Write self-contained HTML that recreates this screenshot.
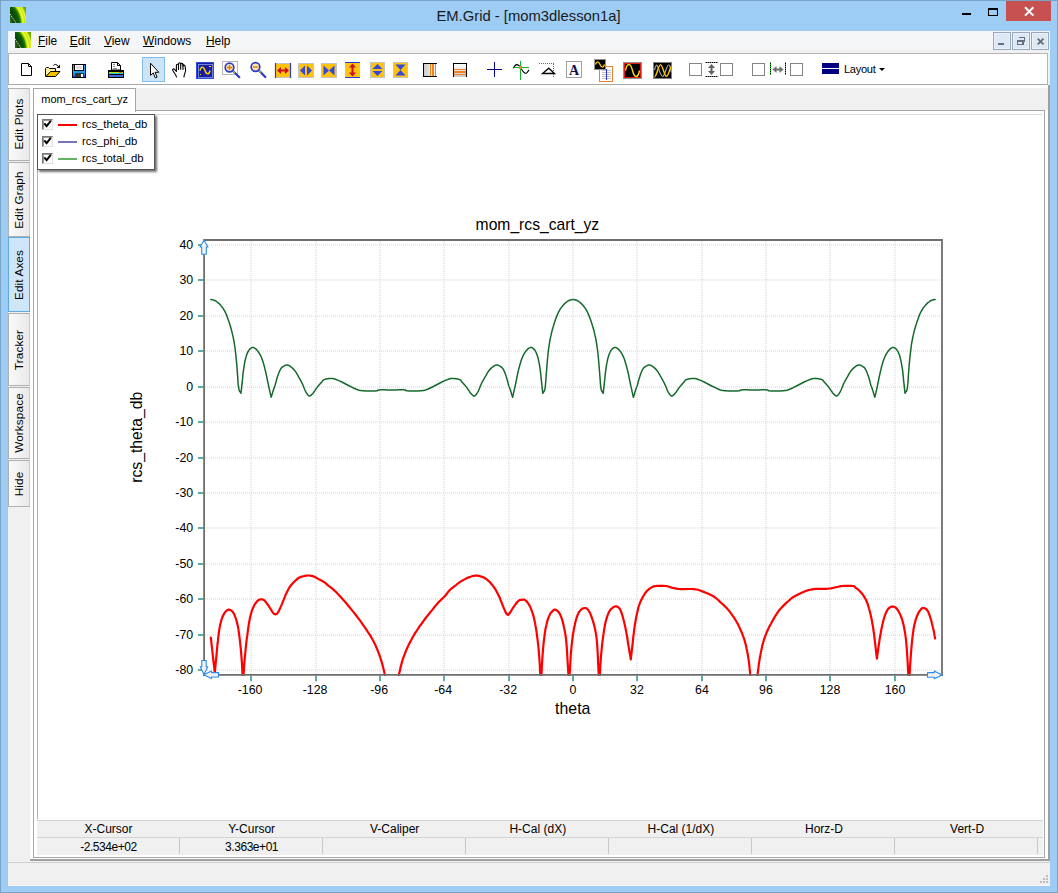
<!DOCTYPE html>
<html><head><meta charset="utf-8"><title>EM.Grid - [mom3dlesson1a]</title>
<style>
html,body{margin:0;padding:0;}
body{width:1058px;height:893px;overflow:hidden;background:#9dcdf5;font-family:"Liberation Sans",sans-serif;color:#000;position:relative;}
.abs,.mi,.vtab,.th,.td,.lg{position:absolute;}
#frame{left:0;top:0;width:1056px;height:891px;border:1px solid #7aa3c8;}
#title{left:436px;top:5.7px;width:185px;text-align:center;font-size:14.8px;line-height:20px;color:#1a1a1a;white-space:nowrap;}
#closeb{left:1006px;top:1px;width:45px;height:20px;background:#c75050;}
#menubar{left:8px;top:31px;width:1042px;height:19px;background:#f5f6f7;}
.mi{top:33px;font-size:11.9px;line-height:16px;}
.mdib{position:absolute;top:32px;width:16px;height:16px;background:#deE8f5;border:1px solid #98a8be;box-shadow:inset 0 0 0 1px #eaf1fa;}
#client{left:8px;top:50px;width:1042px;height:835px;background:#f0f0f0;}
#toolbar{left:8px;top:53px;width:1038px;height:30px;background:#fff;border:1px solid #b4b4b4;border-bottom:1px solid #a8a8a8;box-shadow:0 1px 0 #d0d0d0;}
#dock{left:30px;top:85px;width:1018px;height:774px;background:#fff;border-right:2px solid #a0a0a0;border-bottom:2px solid #a0a0a0;}
#strip{left:33px;top:88px;width:1015px;height:22px;background:#f0f0f0;}
#panel{left:33px;top:110px;width:1010px;height:746px;background:#fff;border:1px solid #a6a6a6;}
#htab{left:33px;top:88px;width:101px;height:23px;background:#fff;border:1px solid #a6a6a6;border-bottom:none;font-size:11px;}
#htab span{position:absolute;left:7.3px;top:4px;line-height:13px;white-space:nowrap;transform-origin:0 0;}
#sel{left:142px;top:57px;width:21px;height:23px;background:#cce4f7;border:1px solid #84bdea;}
.vtab{left:8px;width:20px;background:linear-gradient(90deg,#fafafa,#e9e9e9);border:1px solid #b0b0b0;border-right:1px solid #c8c8c8;}
.vtab.on{background:#cfe6fa;border-color:#5fa9e6;}
.vtab span{position:absolute;left:50%;top:50%;transform:translate(-50%,-50%) rotate(-90deg);white-space:nowrap;font-size:11.8px;line-height:14px;letter-spacing:0.1px;}
#legend{left:37px;top:114px;width:116px;height:54px;background:#fff;border:1px solid #555;box-shadow:2px 2px 2px rgba(0,0,0,0.55);}
.lg{left:44px;font-size:11.3px;line-height:14px;white-space:nowrap;}
.cb{position:absolute;left:4px;width:9px;height:9px;background:#fff;border:1px solid #777;border-right-color:#e0e0e0;border-bottom-color:#e0e0e0;box-shadow:inset 1px 1px 0 #9a9a9a;}
.ls{position:absolute;left:19.5px;width:19.5px;height:2px;}
#tbl{left:37px;top:820px;width:1006px;height:34px;background:#f0f0f0;border-top:1px solid #d4d4d4;}
#tbl .hl{position:absolute;left:0;top:15.5px;width:1006px;height:1px;background:#d4d4d4;}
.th{top:821px;width:143px;text-align:center;font-size:12px;line-height:16px;}
.td{top:839px;width:143px;text-align:center;font-size:12px;letter-spacing:-0.45px;line-height:16px;}
.vs{position:absolute;top:838px;width:1px;height:16px;background:#c8c8c8;}
#status{left:8px;top:861.5px;width:1042px;height:22px;background:#f0f0f0;border-top:1px solid #d0d0d0;border-bottom:1px solid #f8f8f8;}
#lay{left:844px;top:62px;font-size:11.1px;line-height:14px;letter-spacing:-0.3px;}
</style></head><body>
<div class="abs" id="frame"></div>
<div class="abs" id="title">EM.Grid - [mom3dlesson1a]</div>
<div class="abs" id="closeb"></div>
<div class="abs" id="menubar"></div>
<span class="mi" style="left:38.0px"><u>F</u>ile</span>
<span class="mi" style="left:69.7px"><u>E</u>dit</span>
<span class="mi" style="left:104.0px"><u>V</u>iew</span>
<span class="mi" style="left:143.0px"><u>W</u>indows</span>
<span class="mi" style="left:206.0px"><u>H</u>elp</span>
<div class="mdib" style="left:993px"></div>
<div class="mdib" style="left:1012px"></div>
<div class="mdib" style="left:1031px"></div>
<div class="abs" id="client"></div>
<div class="abs" id="toolbar"></div>
<div class="abs" id="sel"></div>
<div class="abs" id="lay">Layout</div>
<div class="abs" style="left:8px;top:85px;width:1042px;height:3px;background:#fbfbfb"></div>
<div class="abs" id="dock"></div>
<div class="abs" id="strip"></div>
<div class="abs" id="panel"></div>
<div class="abs" style="left:37px;top:114px;width:1px;height:705px;background:#b0b0b0"></div><div class="abs" style="left:37px;top:114px;width:1005px;height:1px;background:#dcdcdc"></div>
<div class="abs" id="htab"><span>mom_rcs_cart_yz</span></div>
<div class="vtab" style="top:87.5px;height:71.5px"><span>Edit Plots</span></div>
<div class="vtab" style="top:162.0px;height:73.0px"><span>Edit Graph</span></div>
<div class="vtab on" style="top:237.0px;height:73.0px"><span>Edit Axes</span></div>
<div class="vtab" style="top:313.0px;height:71.0px"><span>Tracker</span></div>
<div class="vtab" style="top:387.0px;height:70.0px"><span>Workspace</span></div>
<div class="vtab" style="top:460.0px;height:45.0px"><span>Hide</span></div>
<div class="abs" id="legend">
<div class="cb" style="top:4.2px"></div><div class="ls" style="top:8.7px;background:#ff0000"></div><div class="lg" style="top:2.2px">rcs_theta_db</div>
<div class="cb" style="top:21.2px"></div><div class="ls" style="top:25.7px;background:#7474b8"></div><div class="lg" style="top:19.2px">rcs_phi_db</div>
<div class="cb" style="top:38.2px"></div><div class="ls" style="top:42.7px;background:#66b266"></div><div class="lg" style="top:36.2px">rcs_total_db</div>
</div>
<div class="abs" id="tbl"><div class="hl"></div></div>
<div class="th" style="left:37.0px">X-Cursor</div>
<div class="td" style="left:37.0px">-2.534e+02</div>
<div class="vs" style="left:178.6px"></div>
<div class="th" style="left:180.1px">Y-Cursor</div>
<div class="td" style="left:180.1px">3.363e+01</div>
<div class="vs" style="left:321.7px"></div>
<div class="th" style="left:323.2px">V-Caliper</div>
<div class="vs" style="left:464.8px"></div>
<div class="th" style="left:466.3px">H-Cal (dX)</div>
<div class="vs" style="left:607.9px"></div>
<div class="th" style="left:609.4px">H-Cal (1/dX)</div>
<div class="vs" style="left:751.0px"></div>
<div class="th" style="left:752.5px">Horz-D</div>
<div class="vs" style="left:894.1px"></div>
<div class="th" style="left:895.6px">Vert-D</div>
<div class="vs" style="left:1037.2px"></div>
<div class="abs" id="status"></div>
<svg class="abs" style="left:0;top:0" width="1058" height="893" viewBox="0 0 1058 893" font-family="Liberation Sans, sans-serif">
<g id="icons" shape-rendering="crispEdges">
<!-- title icon + menu icon -->
<defs>
<linearGradient id="lg1" x1="0" y1="1" x2="1" y2="0"><stop offset="0" stop-color="#0b3d05"/><stop offset="0.38" stop-color="#0a5a08"/><stop offset="0.5" stop-color="#9fd400"/><stop offset="0.62" stop-color="#f6ff3a"/><stop offset="0.75" stop-color="#a6d800"/><stop offset="1" stop-color="#5aa000"/></linearGradient>
<radialGradient id="rg1" cx="-0.9" cy="1.05" r="2.2" fx="-0.9" fy="1.05"><stop offset="0" stop-color="#3a6a14"/><stop offset="0.42" stop-color="#3a6a14"/><stop offset="0.52" stop-color="#0a4208"/><stop offset="0.66" stop-color="#0c5c0a"/><stop offset="0.71" stop-color="#2c8a08"/><stop offset="0.745" stop-color="#b4de00"/><stop offset="0.79" stop-color="#f8ff44"/><stop offset="0.83" stop-color="#c4e600"/><stop offset="0.87" stop-color="#e8f840"/><stop offset="0.9" stop-color="#8ec400"/><stop offset="0.94" stop-color="#6aaa00"/><stop offset="1" stop-color="#5a9c00"/></radialGradient>
<linearGradient id="gw" x1="0" y1="0" x2="1" y2="0"><stop offset="0" stop-color="#c8c8c8"/><stop offset="1" stop-color="#ffffff"/></linearGradient>
<linearGradient id="gw2" x1="0" y1="0" x2="0" y2="1"><stop offset="0" stop-color="#ffffff"/><stop offset="1" stop-color="#c8c8c8"/></linearGradient>
<linearGradient id="sv" x1="0" y1="0" x2="0" y2="1"><stop offset="0" stop-color="#12b0f4"/><stop offset="0.7" stop-color="#1a9af0"/><stop offset="1" stop-color="#3a34d8"/></linearGradient>
</defs>
<rect x="10" y="7" width="16" height="16" fill="url(#rg1)"/>
<path d="M10,14l6,9" stroke="#dfe8c0" stroke-width="1" stroke-dasharray="1.5,1" fill="none" shape-rendering="auto"/>
<rect x="15" y="32" width="16" height="16" fill="url(#rg1)"/>
<path d="M15,39l6,9" stroke="#dfe8c0" stroke-width="1" stroke-dasharray="1.5,1" fill="none" shape-rendering="auto"/>
<!-- caption buttons -->
<rect x="962" y="13" width="9" height="2" fill="#000"/>
<path d="M988.5,9H997.5V15.5H988.5Z" fill="none" stroke="#000" stroke-width="1"/><rect x="988" y="7.5" width="10" height="2.5" fill="#000"/>
<path d="M1025,7.2l8.4,8.4M1033.400,7.2l-8.4,8.4" stroke="#fff" stroke-width="2" fill="none" shape-rendering="auto"/>
<!-- mdi buttons -->
<rect x="998" y="43" width="6" height="2" fill="#66707c"/>
<path d="M1019.300,37.700H1024.800V41.800" fill="none" stroke="#66707c" stroke-width="1.300"/>
<path d="M1017.800,41H1023V44.500H1017.800Z" fill="none" stroke="#66707c" stroke-width="1.200"/><path d="M1017.200,40.800H1023.600" stroke="#66707c" stroke-width="1.800"/>
<path d="M1037.700,38.600l5.800,5.800M1043.500,38.600l-5.800,5.800" stroke="#66707c" stroke-width="1.900" fill="none" shape-rendering="auto"/>
<!-- new -->
<path d="M21.500,63.500H28.500L31.500,66.500V75.500H21.500Z" fill="#fff" stroke="#000" shape-rendering="auto"/><path d="M28.500,63.500V66.500H31.500" fill="none" stroke="#000" shape-rendering="auto"/>
<!-- open -->
<path d="M45.500,76.500V68.500L46.500,67.500H48.500L49.500,68.500H55.500V71.500" fill="#fdf0a0" stroke="#000" shape-rendering="auto"/>
<path d="M46,76.500L50.500,71.500H60L55.500,76.500Z" fill="#f6c200" stroke="#000" shape-rendering="auto"/>
<path d="M53.300,65.500Q55.500,62.800 58.600,66.600" fill="none" stroke="#000" shape-rendering="auto"/><path d="M60,64.500V68H56.500Z" fill="#000" shape-rendering="auto"/>
<!-- save -->
<rect x="72.500" y="64.500" width="13" height="13" fill="url(#sv)" stroke="#000"/>
<rect x="74.500" y="64.500" width="9" height="5.500" fill="#fff" stroke="#000"/><rect x="76" y="66" width="6" height="2.500" fill="#dcdcdc"/>
<rect x="75" y="73" width="9" height="4" fill="#333"/><rect x="81" y="74" width="2" height="3" fill="#fff"/>
<!-- print -->
<path d="M111.500,70V62.500H117.500L120.500,65.500V70Z" fill="#fff" stroke="#000" shape-rendering="auto"/><path d="M117.500,62.500V65.500H120.500" fill="none" stroke="#000" shape-rendering="auto"/>
<path d="M113,64.500h1.500M113,66.500h2M113,68.500h4" stroke="#888" stroke-width="1"/>
<rect x="108.500" y="70.500" width="15" height="7" rx="1" fill="#000" stroke="#000"/>
<rect x="109" y="72" width="14" height="1" fill="#c8e000"/><rect x="119" y="72" width="3" height="1" fill="#ff5020"/><rect x="109" y="73" width="14" height="1" fill="#20d0e0"/><rect x="109" y="75" width="14" height="2" fill="#4868d8"/>
<!-- pointer -->
<path d="M150.500,63.200V75.400L153.200,72.900L155.300,77.900L157.100,77.100L155,72.300H158.800Z" fill="#fff" stroke="#000" stroke-width="1" stroke-linejoin="miter" shape-rendering="auto"/>
<!-- hand -->
<g fill="#fff" stroke="#000" stroke-width="1.100" stroke-linejoin="round" stroke-linecap="round" shape-rendering="auto">
<path d="M176.500,77C176,74.500 173.800,72.500 172.800,70.500C172.300,69.200 173.600,68.400 174.600,69.400L176.400,71.500V65.300C176.400,63.900 178.400,63.900 178.500,65.300V63.800C178.600,62.300 180.600,62.300 180.700,63.800V64.300C180.800,63 182.900,63 183,64.400V66C183.100,64.800 185,64.800 185.100,66.200C185.400,70 186.500,70.500 184.800,73.500C184.300,74.500 184,75.800 184,77"/>
<path d="M178.500,65.300V69.500M180.700,64V69.300M183,64.500V69.500" fill="none"/></g>
<!-- graph -->
<rect x="196.500" y="62.500" width="17" height="16" fill="#1a1e9c" stroke="#2e4cd8"/><rect x="198" y="64" width="14" height="13" fill="none" stroke="#8aa0f0" stroke-width="0.800"/>
<path d="M200,70.500C201,66 203.500,66 205,70.500S209,75 210,70.500" fill="none" stroke="#ffd800" stroke-width="1.400" shape-rendering="auto"/><rect x="199.500" y="73.500" width="1.600" height="1.600" fill="#ffd800"/><rect x="209" y="65.500" width="1.600" height="1.600" fill="#ffd800"/>
<!-- zoom in/out -->
<rect x="222.500" y="61.500" width="15" height="13" fill="none" stroke="#b8b8b8"/>
<g shape-rendering="auto"><path d="M233,71L239.300,77.200" stroke="#3038c8" stroke-width="2.200" stroke-linecap="round"/><path d="M233,71L235,73" stroke="#9acd32" stroke-width="1.200"/>
<circle cx="229.500" cy="67.500" r="4.300" fill="#f6e8b0" stroke="#3038c8" stroke-width="1.700"/><path d="M227,67.500h5M229.500,65v5" stroke="#f07000" stroke-width="1.300"/>
<path d="M259,70.500L265.300,77" stroke="#3038c8" stroke-width="2.200" stroke-linecap="round"/><path d="M259,70.500L261,72.500" stroke="#9acd32" stroke-width="1.200"/>
<circle cx="255.500" cy="67" r="4.300" fill="#f6e8b0" stroke="#3038c8" stroke-width="1.700"/><path d="M253,67h5" stroke="#f07000" stroke-width="1.300"/></g>
<!-- yellow icons -->
<g shape-rendering="auto">
<rect x="275.500" y="63.500" width="15" height="14" fill="#ffc30f" stroke="#c4c4c4"/><path d="M275.500,63v15M290.500,63v15" stroke="#2a3cd8" stroke-width="1.200"/>
<path d="M277,70.500l4,-3.500v2.500h4v-2.500l4,3.500l-4,3.500v-2.500h-4v2.500z" fill="#c8101e"/>
<rect x="298.500" y="63.500" width="15" height="14" fill="#ffc30f" stroke="#c4c4c4"/><path d="M300,70.500l5,-5v10zM312,70.500l-5,-5v10z" fill="#3548d8"/>
<rect x="321.500" y="63.500" width="15" height="14" fill="#ffc30f" stroke="#c4c4c4"/><path d="M323.500,65.500l5.500,5l5.500,-5v10l-5.500,-5l-5.500,5z" fill="#3548d8"/>
<rect x="345.500" y="62.500" width="14" height="15" fill="#ffc30f" stroke="#c4c4c4"/><path d="M345,62.500h15M345,77.500h15" stroke="#2a3cd8" stroke-width="1.200"/>
<path d="M352.500,63.500l3.500,4h-2.500v5h2.500l-3.500,4l-3.500,-4h2.500v-5h-2.500z" fill="#c8101e"/>
<rect x="370.500" y="62.500" width="14" height="15" fill="#ffc30f" stroke="#c4c4c4"/><path d="M377.500,64l5,5h-10zM377.500,76l5,-5h-10z" fill="#3548d8"/>
<rect x="393.500" y="62.500" width="14" height="15" fill="#ffc30f" stroke="#c4c4c4"/><path d="M395.500,64.500h10l-5,5.500l5,5.500h-10l5,-5.500z" fill="#3548d8"/>
</g>
<!-- v-lines / h-lines -->
<rect x="423" y="63.500" width="14" height="13" fill="url(#gw)"/><path d="M437,63.500H423.500V76.500H437" fill="none" stroke="#000" stroke-width="1.200"/><path d="M430.500,64v12M433,64v12M435.500,64v12" stroke="#f08020" stroke-width="1.100"/>
<rect x="453.500" y="64" width="13" height="13" fill="url(#gw2)"/><path d="M453.500,77V63.500H466.500V77" fill="none" stroke="#000" stroke-width="1.200"/><path d="M454,69.500h12M454,72h12M454,74.500h12" stroke="#f08020" stroke-width="1.100"/>
<!-- plus -->
<path d="M494.500,62v15M487,69.500h15" stroke="#000080" stroke-width="1.400"/>
<!-- green cross sine -->
<g shape-rendering="auto"><path d="M513.500,68.200C515.500,63.500 518,63.500 520.500,67.500S525.500,77 529,69.800" fill="none" stroke="#000" stroke-width="1.100"/>
<path d="M520.500,61v19M513.500,67.500h15.500" stroke="#18b030" stroke-width="1.300" shape-rendering="crispEdges"/><rect x="519" y="66" width="3" height="3" fill="#f08020"/></g>
<!-- triangle magenta -->
<path d="M539,63.500h15M553.500,63.500v14" stroke="#ff00ff" stroke-width="1.200" stroke-dasharray="1,1"/>
<path d="M548.800,68.200L554.500,73.500H542.500Z" fill="none" stroke="#000" stroke-width="1.300" shape-rendering="auto"/>
<!-- A -->
<rect x="566.500" y="61.500" width="15" height="16" fill="#fff" stroke="#a0a0a0"/>
<!-- copy -->
<rect x="599.500" y="66.500" width="13" height="15" fill="#fff" stroke="#f08030"/><path d="M601.500,70.500h9M601.500,72.500h9M601.500,74.500h9M601.500,76.500h9M601.500,78.500h9" stroke="#c0c0c0"/><path d="M606.500,69v10.500" stroke="#3030e0" stroke-width="1.400"/>
<rect x="594.500" y="59.500" width="11" height="10" fill="#000" stroke="#909090"/><path d="M595.500,64.500C596.500,61 598.500,61 600,64.500S603.500,68 604.500,64.500" fill="none" stroke="#ffd800" stroke-width="1.300" shape-rendering="auto"/>
<!-- red scope -->
<rect x="623.500" y="62.500" width="18" height="16" fill="#000" stroke="#909090"/><rect x="624.500" y="63.500" width="16" height="14" fill="none" stroke="#e01818" stroke-width="1.200"/>
<path d="M625.500,70.500C627,62.500 630.500,62.500 632.500,70.500S638,78.500 639.500,70.500" fill="none" stroke="#ffe000" stroke-width="1.400" shape-rendering="auto"/>
<!-- gray scope -->
<rect x="653.500" y="62.500" width="18" height="16" fill="#000" stroke="#808080" stroke-width="1.300"/>
<path d="M654.500,70C655.300,67 656,65 656.800,65S660.700,76.500 662.700,76.500S666.600,65 668.600,65S670.500,69 671.300,72" fill="none" stroke="#a8a8a8" stroke-width="1.200" shape-rendering="auto"/>
<path d="M654.500,77C656.500,77 658.500,64.600 660.500,64.600S664.400,76.300 666.400,76.300S669.500,70 671,66.500" fill="none" stroke="#ffc800" stroke-width="1.400" shape-rendering="auto"/>
<!-- squares + arrows -->
<g fill="#fff" stroke="#858585" stroke-width="1"><rect x="689.500" y="63.500" width="12" height="12"/><rect x="720.500" y="63.500" width="12" height="12"/><rect x="752.500" y="63.500" width="12" height="12"/><rect x="790.500" y="63.500" width="12" height="12"/></g>
<path d="M705,62.500h13M705,76.500h13" stroke="#20d020" stroke-width="1" stroke-dasharray="1,1"/><path d="M705,62.500h13M705,76.500h13" stroke="#000" stroke-width="1" stroke-dasharray="1,1" stroke-dashoffset="1"/>
<path d="M711.500,64l3.500,4h-2.500v3h2.500l-3.500,4l-3.500,-4h2.500v-3h-2.500z" fill="#606060" shape-rendering="auto"/>
<path d="M770.500,62v13M785.500,62v13" stroke="#20d020" stroke-width="1" stroke-dasharray="1,1"/><path d="M770.500,62v13M785.500,62v13" stroke="#000" stroke-width="1" stroke-dasharray="1,1" stroke-dashoffset="1"/>
<path d="M772.500,69.500l4,-3.500v2.500h3v-2.500l4,3.500l-4,3.500v-2.500h-3v2.500z" fill="#707070" shape-rendering="auto"/>
<!-- layout -->
<rect x="822" y="63" width="17" height="11" fill="#000080"/><rect x="822" y="68" width="17" height="1" fill="#fff"/>
<path d="M879,68h6l-3,3z" fill="#000" shape-rendering="auto"/>
<!-- grip -->
<g fill="#bdbdbd"><rect x="1046" y="875" width="2" height="2"/><rect x="1043" y="878" width="2" height="2"/><rect x="1046" y="878" width="2" height="2"/><rect x="1040" y="881" width="2" height="2"/><rect x="1043" y="881" width="2" height="2"/><rect x="1046" y="881" width="2" height="2"/></g>
<!-- checkmarks -->
<g fill="none" stroke="#000" stroke-width="2" shape-rendering="auto"><path d="M44.300,123.400l2.300,2.700l4.200,-5.200"/><path d="M44.300,140.400l2.300,2.700l4.200,-5.200"/><path d="M44.300,157.400l2.300,2.700l4.200,-5.200"/></g>
</g>
<text x="574" y="75" font-family="Liberation Serif, serif" font-weight="bold" font-size="14" text-anchor="middle" fill="#101050">A</text>

<g id="chart">
<path d="M205,245H941M205,280H941M205,316H941M205,351H941M205,387H941M205,422H941M205,458H941M205,493H941M205,528H941M205,564H941M205,599H941M205,635H941M205,670H941M251,241V674M316,241V674M380,241V674M444,241V674M509,241V674M573,241V674M637,241V674M702,241V674M766,241V674M830,241V674M895,241V674" stroke="#d4d4d4" stroke-width="1" stroke-dasharray="1,1" fill="none"/>
<path d="M198,245H203.5M198,280H203.5M198,316H203.5M198,351H203.5M198,387H203.5M198,422H203.5M198,458H203.5M198,493H203.5M198,528H203.5M198,564H203.5M198,599H203.5M198,635H203.5M198,670H203.5M251,675.5V681.2M316,675.5V681.2M380,675.5V681.2M444,675.5V681.2M509,675.5V681.2M573,675.5V681.2M637,675.5V681.2M702,675.5V681.2M766,675.5V681.2M830,675.5V681.2M895,675.5V681.2" stroke="#62aaa4" stroke-width="2" fill="none"/>
<clipPath id="cp"><rect x="204" y="240" width="738" height="436"/></clipPath>
<g clip-path="url(#cp)" fill="none" stroke-linejoin="round" stroke-linecap="round">
<path d="M210.8,299.5 L211.4,299.6 L212.1,299.7 L212.7,299.8 L213.3,300.0 L214.0,300.2 L214.8,300.5 L215.5,300.9 L216.3,301.4 L217.1,302.0 L218.0,302.6 L218.8,303.4 L219.7,304.2 L220.5,305.1 L221.3,306.1 L222.2,307.2 L223.0,308.4 L223.8,309.6 L224.6,310.9 L225.2,312.2 L225.9,313.5 L226.5,314.9 L227.1,316.4 L227.6,317.9 L228.2,319.6 L228.9,321.4 L229.5,323.4 L230.2,325.5 L230.8,327.7 L231.4,329.8 L231.9,331.9 L232.4,333.9 L232.9,335.9 L233.3,337.9 L233.7,339.9 L234.1,342.0 L234.4,344.2 L234.8,346.5 L235.1,348.9 L235.4,351.4 L235.7,354.0 L236.0,356.5 L236.2,359.0 L236.5,361.5 L236.7,363.9 L236.9,366.4 L237.1,368.9 L237.3,371.3 L237.4,373.8 L237.7,376.4 L237.8,379.1 L238.0,381.8 L238.2,384.4 L238.5,386.7 L238.8,388.6 L239.1,390.0 L239.4,390.9 L239.8,391.6 L240.2,392.1 L240.6,392.6 L240.9,393.3 L241.1,391.8 L241.3,390.3 L241.5,388.8 L241.6,387.3 L241.8,385.6 L242.1,383.7 L242.3,381.5 L242.5,379.1 L242.8,376.5 L243.0,373.8 L243.3,371.3 L243.7,368.9 L244.0,366.6 L244.4,364.4 L244.8,362.2 L245.2,360.1 L245.7,358.2 L246.2,356.5 L246.6,355.0 L247.1,353.7 L247.6,352.5 L248.2,351.5 L248.7,350.6 L249.2,349.8 L249.8,349.1 L250.4,348.5 L251.0,348.1 L251.7,347.7 L252.3,347.5 L252.9,347.5 L253.6,347.6 L254.3,347.9 L255.1,348.3 L255.8,348.9 L256.5,349.6 L257.2,350.4 L258.0,351.3 L258.7,352.4 L259.4,353.5 L260.2,354.8 L260.9,356.2 L261.6,357.8 L262.2,359.5 L262.9,361.4 L263.5,363.5 L264.1,365.6 L264.7,367.8 L265.2,370.1 L265.8,372.5 L266.3,374.9 L266.9,377.5 L267.4,380.1 L267.9,382.5 L268.4,384.9 L268.8,387.1 L269.3,389.2 L269.8,391.2 L270.2,393.2 L270.7,395.2 L271.1,397.2 L271.6,395.7 L272.1,394.2 L272.6,392.6 L273.1,391.1 L273.5,389.7 L273.9,388.6 L274.1,387.8 L274.4,387.2 L274.5,386.8 L274.7,386.3 L274.9,385.7 L275.2,384.9 L275.5,383.7 L275.9,382.4 L276.3,380.8 L276.7,379.3 L277.1,377.7 L277.6,376.3 L278.1,374.9 L278.6,373.6 L279.1,372.2 L279.6,371.0 L280.2,369.8 L280.7,368.9 L281.2,368.2 L281.7,367.6 L282.2,367.2 L282.8,366.8 L283.3,366.5 L283.8,366.2 L284.3,365.9 L284.8,365.6 L285.3,365.3 L285.8,365.1 L286.3,364.9 L286.9,364.9 L287.5,365.0 L288.1,365.2 L288.7,365.4 L289.3,365.7 L289.9,366.1 L290.6,366.6 L291.3,367.1 L292.0,367.7 L292.8,368.4 L293.5,369.1 L294.2,369.9 L294.9,370.7 L295.6,371.6 L296.2,372.6 L296.8,373.6 L297.4,374.7 L298.0,375.8 L298.6,376.9 L299.2,378.0 L299.9,379.1 L300.5,380.2 L301.1,381.4 L301.7,382.5 L302.3,383.7 L302.9,384.9 L303.4,386.2 L303.9,387.5 L304.4,388.8 L304.9,390.0 L305.4,391.0 L305.8,391.9 L306.3,392.6 L306.7,393.2 L307.1,393.8 L307.4,394.3 L307.8,394.7 L308.1,395.1 L308.4,395.5 L308.7,395.7 L309.0,395.9 L309.3,396.0 L309.7,396.0 L310.1,395.8 L310.6,395.6 L311.1,395.2 L311.6,394.7 L312.2,394.2 L312.8,393.5 L313.4,392.7 L314.1,391.7 L314.9,390.6 L315.6,389.5 L316.4,388.4 L317.1,387.4 L317.8,386.5 L318.6,385.6 L319.3,384.7 L320.0,383.9 L320.7,383.1 L321.4,382.4 L322.0,381.7 L322.4,381.1 L322.8,380.5 L323.4,380.0 L324.1,379.6 L325.1,379.3 L326.3,379.0 L327.6,378.7 L329.2,378.4 L331.0,378.4 L333.0,378.6 L335.4,379.2 L338.3,380.4 L341.9,382.0 L345.7,384.0 L349.5,386.0 L352.9,387.7 L355.7,389.0 L357.7,389.8 L359.1,390.3 L360.2,390.5 L361.1,390.6 L362.2,390.7 L363.7,390.8 L365.7,390.9 L368.1,391.0 L370.5,391.0 L373.0,390.9 L375.1,390.9 L376.7,390.8 L377.6,390.7 L377.9,390.5 L377.9,390.3 L377.9,390.2 L378.2,390.0 L379.1,389.9 L380.6,389.8 L382.6,389.8 L384.8,389.8 L387.2,389.9 L389.6,389.9 L391.9,389.9 L394.1,389.9 L396.5,389.9 L398.9,389.8 L401.2,389.8 L403.1,389.8 L404.6,389.9 L405.5,390.0 L405.8,390.2 L405.8,390.3 L405.8,390.5 L406.2,390.7 L407.1,390.8 L408.7,390.9 L410.8,390.9 L413.2,391.0 L415.7,391.0 L418.1,390.9 L420.1,390.8 L421.5,390.7 L422.6,390.6 L423.6,390.5 L424.7,390.3 L426.1,389.8 L428.1,389.0 L430.8,387.7 L434.3,386.0 L438.1,384.0 L441.9,382.0 L445.4,380.4 L448.4,379.2 L450.7,378.6 L452.8,378.4 L454.6,378.4 L456.1,378.7 L457.5,379.0 L458.7,379.3 L459.7,379.6 L460.4,380.0 L460.9,380.5 L461.3,381.1 L461.8,381.7 L462.4,382.4 L463.0,383.1 L463.7,383.9 L464.5,384.7 L465.2,385.6 L465.9,386.5 L466.6,387.4 L467.4,388.4 L468.1,389.5 L468.9,390.6 L469.6,391.7 L470.3,392.7 L470.9,393.5 L471.5,394.2 L472.1,394.7 L472.6,395.2 L473.1,395.6 L473.6,395.8 L474.1,396.0 L474.4,396.0 L474.8,395.9 L475.0,395.7 L475.3,395.5 L475.6,395.1 L475.9,394.7 L476.3,394.3 L476.7,393.8 L477.1,393.2 L477.5,392.6 L477.9,391.9 L478.4,391.0 L478.8,390.0 L479.3,388.8 L479.8,387.5 L480.3,386.2 L480.9,384.9 L481.4,383.7 L482.0,382.5 L482.6,381.4 L483.3,380.2 L483.9,379.1 L484.5,378.0 L485.1,376.9 L485.8,375.8 L486.4,374.7 L487.0,373.6 L487.6,372.6 L488.2,371.6 L488.9,370.7 L489.5,369.9 L490.3,369.1 L491.0,368.4 L491.7,367.7 L492.5,367.1 L493.1,366.6 L493.8,366.1 L494.4,365.7 L495.1,365.4 L495.7,365.2 L496.3,365.0 L496.9,364.9 L497.4,364.9 L497.9,365.1 L498.4,365.3 L498.9,365.6 L499.4,365.9 L499.9,366.2 L500.5,366.5 L501.0,366.8 L501.5,367.2 L502.0,367.6 L502.5,368.2 L503.1,368.9 L503.6,369.8 L504.1,371.0 L504.6,372.2 L505.2,373.6 L505.7,374.9 L506.1,376.3 L506.6,377.7 L507.0,379.3 L507.5,380.8 L507.9,382.4 L508.2,383.7 L508.6,384.9 L508.8,385.7 L509.0,386.3 L509.2,386.8 L509.4,387.2 L509.6,387.8 L509.9,388.6 L510.3,389.7 L510.7,391.1 L511.2,392.6 L511.6,394.2 L512.1,395.7 L512.6,397.2 L513.1,395.2 L513.5,393.2 L514.0,391.2 L514.4,389.2 L514.9,387.1 L515.4,384.9 L515.9,382.5 L516.4,380.1 L516.9,377.5 L517.4,374.9 L517.9,372.5 L518.5,370.1 L519.1,367.8 L519.7,365.6 L520.3,363.5 L520.9,361.4 L521.5,359.5 L522.2,357.8 L522.9,356.2 L523.6,354.8 L524.3,353.5 L525.0,352.4 L525.8,351.3 L526.5,350.4 L527.2,349.6 L528.0,348.9 L528.7,348.3 L529.4,347.9 L530.1,347.6 L530.8,347.5 L531.5,347.5 L532.1,347.7 L532.7,348.1 L533.3,348.5 L533.9,349.1 L534.5,349.8 L535.1,350.6 L535.6,351.5 L536.1,352.5 L536.6,353.7 L537.1,355.0 L537.6,356.5 L538.1,358.2 L538.5,360.1 L538.9,362.2 L539.4,364.4 L539.7,366.6 L540.1,368.9 L540.4,371.3 L540.7,373.8 L541.0,376.5 L541.2,379.1 L541.5,381.5 L541.7,383.7 L541.9,385.6 L542.1,387.3 L542.3,388.8 L542.5,390.3 L542.6,391.8 L542.8,393.3 L543.2,392.6 L543.6,392.1 L544.0,391.6 L544.3,390.9 L544.7,390.0 L545.0,388.6 L545.3,386.7 L545.5,384.4 L545.7,381.8 L545.9,379.1 L546.1,376.4 L546.3,373.8 L546.5,371.3 L546.7,368.9 L546.9,366.4 L547.1,363.9 L547.3,361.5 L547.5,359.0 L547.8,356.5 L548.0,354.0 L548.3,351.4 L548.6,348.9 L549.0,346.5 L549.3,344.2 L549.7,342.0 L550.0,339.9 L550.4,337.9 L550.9,335.9 L551.3,333.9 L551.8,331.9 L552.3,329.8 L552.9,327.7 L553.6,325.5 L554.2,323.4 L554.9,321.4 L555.5,319.6 L556.1,317.9 L556.7,316.4 L557.3,314.9 L557.9,313.5 L558.5,312.2 L559.2,310.9 L559.9,309.6 L560.7,308.4 L561.6,307.2 L562.4,306.1 L563.3,305.1 L564.1,304.2 L564.9,303.4 L565.8,302.6 L566.6,302.0 L567.4,301.4 L568.2,300.9 L569.0,300.5 L569.7,300.2 L570.4,300.0 L571.1,299.8 L571.7,299.7 L572.3,299.6 L573.0,299.5 L573.7,299.6 L574.3,299.7 L574.9,299.8 L575.6,300.0 L576.3,300.2 L577.0,300.5 L577.8,300.9 L578.6,301.4 L579.4,302.0 L580.2,302.6 L581.1,303.4 L581.9,304.2 L582.7,305.1 L583.6,306.1 L584.4,307.2 L585.3,308.4 L586.1,309.6 L586.8,310.9 L587.5,312.2 L588.1,313.5 L588.7,314.9 L589.3,316.4 L589.9,317.9 L590.5,319.6 L591.1,321.4 L591.8,323.4 L592.4,325.5 L593.1,327.7 L593.7,329.8 L594.2,331.9 L594.7,333.9 L595.1,335.9 L595.6,337.9 L596.0,339.9 L596.3,342.0 L596.7,344.2 L597.0,346.5 L597.4,348.9 L597.7,351.4 L598.0,354.0 L598.2,356.5 L598.5,359.0 L598.7,361.5 L598.9,363.9 L599.1,366.4 L599.3,368.9 L599.5,371.3 L599.7,373.8 L599.9,376.4 L600.1,379.1 L600.3,381.8 L600.5,384.4 L600.7,386.7 L601.0,388.6 L601.3,390.0 L601.7,390.9 L602.0,391.6 L602.4,392.1 L602.8,392.6 L603.2,393.3 L603.4,391.8 L603.5,390.3 L603.7,388.8 L603.9,387.3 L604.1,385.6 L604.3,383.7 L604.5,381.5 L604.8,379.1 L605.0,376.5 L605.3,373.8 L605.6,371.3 L605.9,368.9 L606.3,366.6 L606.6,364.4 L607.1,362.2 L607.5,360.1 L607.9,358.2 L608.4,356.5 L608.9,355.0 L609.4,353.7 L609.9,352.5 L610.4,351.5 L610.9,350.6 L611.5,349.8 L612.1,349.1 L612.7,348.5 L613.3,348.1 L613.9,347.7 L614.5,347.5 L615.2,347.5 L615.9,347.6 L616.6,347.9 L617.3,348.3 L618.0,348.9 L618.8,349.6 L619.5,350.4 L620.2,351.3 L621.0,352.4 L621.7,353.5 L622.4,354.8 L623.1,356.2 L623.8,357.8 L624.5,359.5 L625.1,361.4 L625.7,363.5 L626.3,365.6 L626.9,367.8 L627.5,370.1 L628.1,372.5 L628.6,374.9 L629.1,377.5 L629.6,380.1 L630.1,382.5 L630.6,384.9 L631.1,387.1 L631.6,389.2 L632.0,391.2 L632.5,393.2 L632.9,395.2 L633.4,397.2 L633.9,395.7 L634.4,394.2 L634.8,392.6 L635.3,391.1 L635.7,389.7 L636.1,388.6 L636.4,387.8 L636.6,387.2 L636.8,386.8 L637.0,386.3 L637.2,385.7 L637.5,384.9 L637.8,383.7 L638.1,382.4 L638.5,380.8 L639.0,379.3 L639.4,377.7 L639.9,376.3 L640.3,374.9 L640.8,373.6 L641.4,372.2 L641.9,371.0 L642.4,369.8 L643.0,368.9 L643.5,368.2 L644.0,367.6 L644.5,367.2 L645.0,366.8 L645.5,366.5 L646.0,366.2 L646.6,365.9 L647.1,365.6 L647.6,365.3 L648.1,365.1 L648.6,364.9 L649.1,364.9 L649.7,365.0 L650.3,365.2 L650.9,365.4 L651.5,365.7 L652.2,366.1 L652.9,366.6 L653.5,367.1 L654.3,367.7 L655.0,368.4 L655.7,369.1 L656.5,369.9 L657.1,370.7 L657.8,371.6 L658.4,372.6 L659.0,373.6 L659.6,374.7 L660.2,375.8 L660.9,376.9 L661.5,378.0 L662.1,379.1 L662.7,380.2 L663.4,381.4 L664.0,382.5 L664.5,383.7 L665.1,384.9 L665.7,386.2 L666.2,387.5 L666.7,388.8 L667.2,390.0 L667.6,391.0 L668.1,391.9 L668.5,392.6 L668.9,393.2 L669.3,393.8 L669.7,394.3 L670.0,394.7 L670.4,395.1 L670.7,395.5 L671.0,395.7 L671.2,395.9 L671.6,396.0 L672.0,396.0 L672.4,395.8 L672.9,395.6 L673.4,395.2 L673.9,394.7 L674.5,394.2 L675.0,393.5 L675.7,392.7 L676.4,391.7 L677.1,390.6 L677.9,389.5 L678.6,388.4 L679.4,387.4 L680.1,386.5 L680.8,385.6 L681.5,384.7 L682.3,383.9 L683.0,383.1 L683.6,382.4 L684.2,381.7 L684.7,381.1 L685.1,380.5 L685.6,380.0 L686.3,379.6 L687.3,379.3 L688.5,379.0 L689.9,378.7 L691.4,378.4 L693.2,378.4 L695.3,378.6 L697.6,379.2 L700.6,380.4 L704.1,382.0 L707.9,384.0 L711.7,386.0 L715.2,387.7 L718.0,389.0 L719.9,389.8 L721.3,390.3 L722.4,390.5 L723.4,390.6 L724.5,390.7 L726.0,390.8 L728.0,390.9 L730.3,391.0 L732.8,391.0 L735.2,390.9 L737.3,390.9 L739.0,390.8 L739.8,390.7 L740.2,390.5 L740.2,390.3 L740.2,390.2 L740.5,390.0 L741.4,389.9 L742.9,389.8 L744.8,389.8 L747.1,389.8 L749.5,389.9 L751.9,389.9 L754.1,389.9 L756.4,389.9 L758.8,389.9 L761.2,389.8 L763.4,389.8 L765.4,389.8 L766.9,389.9 L767.8,390.0 L768.1,390.2 L768.1,390.3 L768.1,390.5 L768.4,390.7 L769.3,390.8 L770.9,390.9 L773.0,390.9 L775.5,391.0 L777.9,391.0 L780.3,390.9 L782.3,390.8 L783.8,390.7 L784.9,390.6 L785.8,390.5 L786.9,390.3 L788.3,389.8 L790.3,389.0 L793.1,387.7 L796.5,386.0 L800.3,384.0 L804.1,382.0 L807.7,380.4 L810.6,379.2 L813.0,378.6 L815.0,378.4 L816.8,378.4 L818.4,378.7 L819.7,379.0 L821.0,379.3 L821.9,379.6 L822.6,380.0 L823.2,380.5 L823.6,381.1 L824.0,381.7 L824.6,382.4 L825.3,383.1 L826.0,383.9 L826.7,384.7 L827.4,385.6 L828.2,386.5 L828.9,387.4 L829.6,388.4 L830.4,389.5 L831.1,390.6 L831.9,391.7 L832.6,392.7 L833.2,393.5 L833.8,394.2 L834.4,394.7 L834.9,395.2 L835.4,395.6 L835.9,395.8 L836.3,396.0 L836.7,396.0 L837.0,395.9 L837.3,395.7 L837.6,395.5 L837.9,395.1 L838.2,394.7 L838.6,394.3 L838.9,393.8 L839.3,393.2 L839.7,392.6 L840.2,391.9 L840.6,391.0 L841.1,390.0 L841.6,388.8 L842.1,387.5 L842.6,386.2 L843.1,384.9 L843.7,383.7 L844.3,382.5 L844.9,381.4 L845.5,380.2 L846.1,379.1 L846.8,378.0 L847.4,376.9 L848.0,375.8 L848.6,374.7 L849.2,373.6 L849.8,372.6 L850.4,371.6 L851.1,370.7 L851.8,369.9 L852.5,369.1 L853.2,368.4 L854.0,367.7 L854.7,367.1 L855.4,366.6 L856.1,366.1 L856.7,365.7 L857.3,365.4 L857.9,365.2 L858.5,365.0 L859.1,364.9 L859.7,364.9 L860.2,365.1 L860.7,365.3 L861.2,365.6 L861.7,365.9 L862.2,366.2 L862.7,366.5 L863.2,366.8 L863.8,367.2 L864.3,367.6 L864.8,368.2 L865.3,368.9 L865.8,369.8 L866.4,371.0 L866.9,372.2 L867.4,373.6 L867.9,374.9 L868.4,376.3 L868.9,377.7 L869.3,379.3 L869.7,380.8 L870.1,382.4 L870.5,383.7 L870.8,384.9 L871.1,385.7 L871.3,386.3 L871.5,386.8 L871.6,387.2 L871.9,387.8 L872.1,388.6 L872.5,389.7 L873.0,391.1 L873.4,392.6 L873.9,394.2 L874.4,395.7 L874.9,397.2 L875.3,395.2 L875.8,393.2 L876.2,391.2 L876.7,389.2 L877.2,387.1 L877.6,384.9 L878.1,382.5 L878.6,380.1 L879.1,377.5 L879.7,374.9 L880.2,372.5 L880.8,370.1 L881.3,367.8 L881.9,365.6 L882.5,363.5 L883.1,361.4 L883.8,359.5 L884.5,357.8 L885.1,356.2 L885.8,354.8 L886.6,353.5 L887.3,352.4 L888.0,351.3 L888.8,350.4 L889.5,349.6 L890.2,348.9 L890.9,348.3 L891.7,347.9 L892.4,347.6 L893.0,347.5 L893.7,347.5 L894.4,347.7 L895.0,348.1 L895.6,348.5 L896.2,349.1 L896.8,349.8 L897.3,350.6 L897.9,351.5 L898.4,352.5 L898.9,353.7 L899.4,355.0 L899.9,356.5 L900.3,358.2 L900.8,360.1 L901.2,362.2 L901.6,364.4 L902.0,366.6 L902.4,368.9 L902.7,371.3 L903.0,373.8 L903.2,376.5 L903.5,379.1 L903.7,381.5 L904.0,383.7 L904.2,385.6 L904.4,387.3 L904.5,388.8 L904.7,390.3 L904.9,391.8 L905.0,393.3 L905.4,392.6 L905.8,392.1 L906.2,391.6 L906.6,390.9 L906.9,390.0 L907.2,388.6 L907.5,386.7 L907.8,384.4 L908.0,381.8 L908.2,379.1 L908.3,376.4 L908.5,373.8 L908.7,371.3 L908.9,368.9 L909.1,366.4 L909.3,363.9 L909.5,361.5 L909.8,359.0 L910.0,356.5 L910.3,354.0 L910.6,351.4 L910.9,348.9 L911.2,346.5 L911.5,344.2 L911.9,342.0 L912.3,339.9 L912.7,337.9 L913.1,335.9 L913.6,333.9 L914.0,331.9 L914.6,329.8 L915.2,327.7 L915.8,325.5 L916.5,323.4 L917.1,321.4 L917.8,319.6 L918.4,317.9 L918.9,316.4 L919.5,314.9 L920.1,313.5 L920.8,312.2 L921.5,310.9 L922.2,309.6 L923.0,308.4 L923.8,307.2 L924.7,306.1 L925.5,305.1 L926.4,304.2 L927.2,303.4 L928.0,302.6 L928.9,302.0 L929.7,301.4 L930.5,300.9 L931.2,300.5 L932.0,300.2 L932.6,300.0 L933.3,299.8 L934.0,299.7 L934.6,299.6 L935.2,299.5" stroke="#15692c" stroke-width="1.5"/>
<path d="M210.8,637.5 L211.2,640.7 L211.5,643.8 L211.9,647.0 L212.2,650.2 L212.6,653.3 L212.9,656.3 L213.2,659.2 L213.5,662.0 L213.9,664.8 L214.2,667.5 L214.5,670.2 L214.8,673.0 L215.1,669.8 L215.4,666.6 L215.7,663.4 L216.0,660.1 L216.3,657.0 L216.6,653.8 L216.9,650.6 L217.2,647.3 L217.5,644.0 L217.9,640.9 L218.2,637.9 L218.5,635.3 L218.8,633.0 L219.1,630.9 L219.4,629.1 L219.7,627.4 L220.0,625.8 L220.3,624.2 L220.7,622.7 L221.1,621.2 L221.5,619.8 L221.9,618.5 L222.3,617.3 L222.8,616.2 L223.3,615.2 L223.8,614.2 L224.3,613.4 L224.8,612.6 L225.4,611.9 L225.9,611.3 L226.4,610.8 L226.9,610.4 L227.4,610.1 L227.9,609.8 L228.4,609.7 L229.0,609.7 L229.6,609.8 L230.2,610.0 L230.9,610.3 L231.5,610.7 L232.1,611.3 L232.7,611.9 L233.2,612.7 L233.8,613.5 L234.3,614.5 L234.8,615.6 L235.2,616.8 L235.7,618.1 L236.2,619.5 L236.6,621.0 L237.0,622.5 L237.4,624.2 L237.8,626.0 L238.2,627.9 L238.5,629.9 L238.8,631.9 L239.1,634.0 L239.4,636.3 L239.7,638.8 L240.0,641.5 L240.3,644.5 L240.7,647.8 L241.0,651.3 L241.3,655.0 L241.6,658.7 L241.9,662.4 L242.1,666.2 L242.3,670.1 L242.5,674.0 L242.6,678.0 L242.7,682.0 L242.9,686.0 L243.1,682.0 L243.4,677.9 L243.6,673.9 L243.9,669.9 L244.1,666.0 L244.4,662.4 L244.7,659.0 L245.0,655.7 L245.3,652.6 L245.6,649.6 L245.9,646.7 L246.2,643.9 L246.5,641.2 L246.8,638.6 L247.2,636.0 L247.5,633.6 L247.8,631.3 L248.1,629.1 L248.4,627.0 L248.7,625.1 L249.0,623.2 L249.3,621.5 L249.6,619.8 L249.9,618.1 L250.3,616.5 L250.7,614.9 L251.1,613.4 L251.5,612.0 L251.9,610.7 L252.4,609.4 L252.9,608.2 L253.4,607.1 L253.9,606.0 L254.4,605.0 L254.9,604.1 L255.5,603.3 L256.1,602.5 L256.6,601.8 L257.2,601.2 L257.8,600.6 L258.4,600.2 L259.1,599.8 L259.8,599.5 L260.5,599.4 L261.3,599.3 L262.1,599.4 L262.8,599.5 L263.5,599.8 L264.2,600.2 L264.8,600.8 L265.4,601.5 L266.0,602.3 L266.6,603.1 L267.2,603.9 L267.8,604.7 L268.5,605.7 L269.1,606.6 L269.7,607.6 L270.3,608.5 L270.9,609.4 L271.4,610.2 L271.9,611.1 L272.4,611.9 L272.9,612.6 L273.4,613.2 L273.9,613.7 L274.4,614.0 L274.9,614.2 L275.4,614.3 L276.0,614.3 L276.5,614.1 L277.0,613.7 L277.5,613.1 L278.0,612.3 L278.6,611.4 L279.1,610.4 L279.6,609.3 L280.1,608.2 L280.6,607.1 L281.1,605.9 L281.7,604.6 L282.2,603.3 L282.7,602.1 L283.2,600.8 L283.7,599.6 L284.2,598.3 L284.7,597.1 L285.2,595.8 L285.7,594.6 L286.3,593.4 L286.9,592.2 L287.5,591.0 L288.1,589.8 L288.7,588.7 L289.3,587.6 L290.0,586.6 L290.7,585.7 L291.4,584.8 L292.1,584.0 L292.8,583.2 L293.6,582.4 L294.3,581.7 L295.0,581.0 L295.7,580.3 L296.4,579.7 L297.1,579.0 L297.8,578.5 L298.6,578.0 L299.4,577.6 L300.2,577.2 L301.0,576.9 L301.8,576.6 L302.7,576.4 L303.5,576.2 L304.3,576.0 L305.1,575.8 L305.9,575.7 L306.8,575.6 L307.6,575.5 L308.4,575.5 L309.2,575.5 L310.1,575.6 L310.9,575.8 L311.7,575.9 L312.6,576.1 L313.4,576.4 L314.2,576.7 L315.0,577.1 L315.8,577.5 L316.6,577.9 L317.4,578.4 L318.3,578.9 L319.3,579.4 L320.4,580.0 L321.5,580.6 L322.6,581.2 L323.6,581.8 L324.5,582.3 L325.1,582.7 L325.5,583.1 L325.9,583.4 L326.2,583.7 L326.7,584.2 L327.4,584.8 L328.3,585.6 L329.4,586.4 L330.7,587.3 L332.0,588.4 L333.4,589.6 L334.8,590.9 L336.3,592.3 L337.7,593.8 L339.3,595.5 L341.0,597.3 L342.7,599.2 L344.6,601.4 L346.7,603.8 L348.9,606.5 L351.3,609.4 L353.7,612.4 L356.0,615.3 L358.2,618.1 L360.3,620.9 L362.3,623.8 L364.3,626.6 L366.2,629.3 L367.8,631.9 L369.3,634.1 L370.5,635.9 L371.4,637.5 L372.2,638.8 L372.8,640.0 L373.5,641.3 L374.2,642.7 L375.0,644.3 L375.7,645.9 L376.4,647.5 L377.1,649.2 L377.8,650.9 L378.5,652.6 L379.2,654.4 L379.8,656.2 L380.4,658.0 L381.0,659.9 L381.6,661.8 L382.2,663.7 L382.7,665.7 L383.2,667.7 L383.7,669.8 L384.2,671.9 L384.6,673.9 L385.1,676.0 L387.5,700.0 L396.2,700.0 L398.6,676.0 L399.1,673.7 L399.7,671.4 L400.2,669.1 L400.7,666.8 L401.3,664.6 L401.9,662.4 L402.5,660.3 L403.2,658.2 L403.9,656.2 L404.7,654.2 L405.5,652.1 L406.3,650.1 L407.2,648.0 L408.2,645.9 L409.2,643.8 L410.3,641.7 L411.4,639.7 L412.4,637.8 L413.4,636.0 L414.4,634.3 L415.4,632.7 L416.5,631.1 L417.5,629.5 L418.6,627.9 L419.7,626.2 L421.0,624.5 L422.2,622.8 L423.4,621.1 L424.6,619.5 L425.7,618.0 L426.7,616.7 L427.7,615.5 L428.6,614.3 L429.5,613.2 L430.4,612.1 L431.4,610.9 L432.5,609.6 L433.6,608.2 L434.7,606.8 L435.8,605.4 L437.0,604.1 L438.1,602.8 L439.2,601.6 L440.4,600.5 L441.5,599.4 L442.6,598.3 L443.7,597.2 L444.7,596.2 L445.6,595.2 L446.4,594.2 L447.2,593.2 L447.9,592.2 L448.7,591.3 L449.5,590.4 L450.4,589.5 L451.3,588.7 L452.3,588.0 L453.3,587.2 L454.2,586.4 L455.2,585.7 L456.1,585.0 L457.0,584.2 L457.9,583.5 L458.8,582.8 L459.8,582.1 L460.9,581.4 L462.2,580.6 L463.6,579.9 L465.1,579.1 L466.7,578.3 L468.1,577.6 L469.5,577.1 L470.7,576.7 L471.8,576.3 L472.9,576.0 L474.0,575.9 L475.0,575.7 L476.1,575.7 L477.2,575.7 L478.4,575.9 L479.5,576.1 L480.6,576.4 L481.7,576.7 L482.8,577.1 L483.8,577.6 L484.8,578.1 L485.7,578.7 L486.6,579.3 L487.6,580.1 L488.5,580.9 L489.5,581.8 L490.4,582.8 L491.4,584.0 L492.4,585.1 L493.3,586.3 L494.2,587.6 L495.1,588.9 L495.9,590.3 L496.7,591.7 L497.5,593.2 L498.3,594.7 L499.0,596.2 L499.7,597.7 L500.3,599.4 L501.0,601.0 L501.6,602.6 L502.2,604.2 L502.8,605.7 L503.4,607.2 L504.1,608.8 L504.8,610.3 L505.4,611.7 L506.0,612.9 L506.6,613.8 L507.1,614.4 L507.4,614.7 L507.8,614.8 L508.1,614.8 L508.5,614.5 L509.0,614.0 L509.6,613.2 L510.4,612.2 L511.1,610.9 L512.0,609.5 L512.8,608.2 L513.6,607.0 L514.4,605.9 L515.3,604.7 L516.1,603.5 L516.9,602.5 L517.7,601.5 L518.5,600.8 L519.2,600.3 L519.8,600.0 L520.5,599.9 L521.1,599.8 L521.6,599.8 L522.2,599.8 L522.7,599.7 L523.2,599.6 L523.7,599.6 L524.2,599.6 L524.7,599.8 L525.3,600.2 L526.0,600.8 L526.7,601.5 L527.4,602.4 L528.2,603.4 L528.9,604.5 L529.6,605.7 L530.3,607.1 L530.9,608.6 L531.6,610.3 L532.2,612.0 L532.8,613.8 L533.3,615.6 L533.8,617.4 L534.2,619.1 L534.6,620.9 L535.0,622.8 L535.3,624.7 L535.7,626.7 L536.0,628.8 L536.4,630.9 L536.7,633.1 L537.0,635.4 L537.3,637.8 L537.6,640.2 L537.9,642.6 L538.2,644.9 L538.4,647.2 L538.7,649.8 L538.9,652.8 L539.2,656.3 L539.5,660.5 L539.8,665.2 L540.0,670.3 L540.3,675.6 L540.6,680.9 L540.9,686.0 L541.2,680.9 L541.4,675.7 L541.7,670.5 L541.9,665.5 L542.2,660.7 L542.5,656.3 L542.8,652.4 L543.1,648.7 L543.4,645.4 L543.7,642.3 L544.1,639.3 L544.4,636.5 L544.8,633.8 L545.1,631.4 L545.5,629.0 L545.9,626.9 L546.4,624.9 L546.8,623.0 L547.3,621.2 L547.8,619.6 L548.3,618.1 L548.8,616.7 L549.4,615.5 L549.9,614.4 L550.4,613.5 L551.0,612.7 L551.5,612.1 L552.0,611.6 L552.5,611.1 L553.0,610.7 L553.4,610.3 L553.7,610.0 L554.0,609.8 L554.3,609.7 L554.7,609.7 L555.1,609.7 L555.6,609.8 L556.1,610.0 L556.7,610.4 L557.3,610.8 L557.9,611.3 L558.5,611.9 L559.0,612.7 L559.6,613.5 L560.1,614.5 L560.6,615.6 L561.1,616.8 L561.6,618.1 L562.1,619.5 L562.5,620.9 L562.9,622.4 L563.3,624.0 L563.7,625.9 L564.1,627.9 L564.5,629.9 L564.9,631.8 L565.3,633.9 L565.7,636.4 L566.1,639.7 L566.5,643.9 L566.9,649.4 L567.3,656.0 L567.7,663.3 L568.2,671.0 L568.6,678.7 L569.0,686.0 L569.3,680.5 L569.6,674.7 L570.0,669.0 L570.3,663.4 L570.6,658.3 L570.9,653.8 L571.2,650.0 L571.5,646.8 L571.8,644.0 L572.1,641.4 L572.4,639.0 L572.7,636.5 L573.1,634.0 L573.5,631.5 L573.9,629.2 L574.3,627.0 L574.8,624.9 L575.2,623.0 L575.6,621.3 L576.0,619.8 L576.4,618.5 L576.8,617.2 L577.2,616.1 L577.6,615.0 L578.1,614.0 L578.5,613.0 L579.0,612.1 L579.6,611.3 L580.1,610.6 L580.7,610.0 L581.4,609.4 L582.1,608.9 L582.8,608.5 L583.6,608.2 L584.3,608.0 L585.0,608.0 L585.7,608.1 L586.3,608.3 L586.9,608.7 L587.5,609.2 L588.1,609.9 L588.7,610.7 L589.3,611.7 L590.0,613.0 L590.6,614.4 L591.2,615.9 L591.8,617.6 L592.4,619.3 L593.0,621.1 L593.5,623.0 L594.1,625.1 L594.6,627.2 L595.1,629.4 L595.5,631.6 L595.9,633.6 L596.2,635.4 L596.5,637.3 L596.7,639.5 L597.0,642.5 L597.3,646.4 L597.6,651.6 L597.9,657.8 L598.2,664.7 L598.6,671.9 L598.9,679.1 L599.2,686.0 L599.5,681.0 L599.8,675.8 L600.1,670.7 L600.3,665.6 L600.7,660.8 L601.0,656.3 L601.4,652.1 L601.8,648.0 L602.2,644.2 L602.6,640.6 L603.1,637.2 L603.5,634.1 L603.9,631.3 L604.3,628.7 L604.7,626.5 L605.1,624.3 L605.5,622.4 L606.0,620.5 L606.5,618.7 L607.0,617.1 L607.5,615.6 L608.0,614.3 L608.5,613.0 L609.1,611.9 L609.7,610.9 L610.3,610.0 L610.9,609.3 L611.5,608.6 L612.2,608.1 L612.8,607.6 L613.4,607.2 L614.0,606.8 L614.7,606.5 L615.3,606.4 L615.9,606.3 L616.5,606.4 L617.1,606.6 L617.7,606.9 L618.3,607.3 L618.9,607.8 L619.5,608.5 L620.1,609.4 L620.6,610.5 L621.1,611.7 L621.6,613.1 L622.1,614.6 L622.6,616.3 L623.1,618.1 L623.6,620.1 L624.2,622.2 L624.7,624.5 L625.2,626.8 L625.7,629.2 L626.2,631.6 L626.6,634.0 L627.1,636.5 L627.5,639.0 L627.8,641.6 L628.2,644.0 L628.6,646.4 L629.0,648.7 L629.3,650.8 L629.7,653.0 L630.1,655.1 L630.4,657.2 L630.8,659.3 L631.0,657.2 L631.3,655.3 L631.5,653.3 L631.7,651.3 L632.0,649.0 L632.3,646.4 L632.7,643.3 L633.0,639.8 L633.4,636.1 L633.9,632.4 L634.3,628.8 L634.8,625.5 L635.3,622.5 L635.8,619.5 L636.3,616.7 L636.9,614.0 L637.4,611.6 L637.9,609.4 L638.4,607.5 L638.8,606.0 L639.3,604.6 L639.8,603.4 L640.3,602.1 L640.9,600.8 L641.6,599.3 L642.4,597.8 L643.3,596.2 L644.2,594.7 L645.0,593.4 L645.9,592.2 L646.7,591.2 L647.5,590.4 L648.4,589.6 L649.2,589.0 L650.0,588.4 L650.8,587.9 L651.6,587.4 L652.2,587.0 L652.9,586.7 L653.7,586.4 L654.6,586.2 L655.7,586.0 L657.1,585.9 L658.7,585.8 L660.5,585.8 L662.3,585.8 L664.0,585.9 L665.6,586.0 L667.0,586.2 L668.3,586.5 L669.5,586.9 L670.6,587.2 L671.8,587.6 L673.0,587.9 L674.2,588.2 L675.2,588.4 L676.3,588.6 L677.5,588.8 L678.8,589.0 L680.4,589.1 L682.4,589.1 L684.7,589.1 L687.1,589.0 L689.6,589.0 L691.9,589.0 L693.9,589.1 L695.5,589.3 L696.8,589.5 L698.0,589.8 L699.2,590.2 L700.4,590.6 L701.9,591.2 L703.7,591.9 L705.7,592.7 L707.8,593.6 L710.0,594.5 L711.9,595.5 L713.7,596.5 L715.2,597.5 L716.5,598.5 L717.6,599.5 L718.7,600.5 L719.8,601.6 L721.0,602.7 L722.2,603.8 L723.5,604.9 L724.7,606.1 L725.9,607.3 L727.2,608.6 L728.4,610.0 L729.7,611.6 L731.0,613.3 L732.2,615.1 L733.5,616.9 L734.7,618.7 L735.8,620.5 L736.8,622.2 L737.7,623.8 L738.5,625.5 L739.3,627.1 L740.1,628.8 L740.8,630.4 L741.5,632.0 L742.2,633.7 L742.8,635.3 L743.4,636.9 L744.0,638.6 L744.5,640.2 L745.0,641.8 L745.4,643.4 L745.8,645.1 L746.2,646.7 L746.5,648.4 L746.9,650.1 L747.2,651.8 L747.6,653.6 L747.9,655.3 L748.2,657.2 L748.5,659.1 L748.8,661.2 L749.1,663.5 L749.4,665.9 L749.6,668.4 L749.9,670.9 L750.1,673.5 L750.4,676.0 L751.6,700.0 L756.3,700.0 L757.3,676.0 L757.7,673.1 L758.1,670.1 L758.5,667.2 L758.8,664.3 L759.3,661.4 L759.7,658.7 L760.2,656.0 L760.7,653.4 L761.2,650.9 L761.7,648.5 L762.2,646.1 L762.8,643.9 L763.4,641.8 L763.9,639.9 L764.5,638.1 L765.1,636.4 L765.8,634.6 L766.5,632.8 L767.3,631.0 L768.1,629.2 L769.0,627.3 L770.0,625.5 L771.0,623.7 L772.0,621.8 L773.1,619.9 L774.2,617.9 L775.4,615.8 L776.7,613.8 L778.0,611.9 L779.4,610.0 L781.0,608.2 L782.7,606.4 L784.5,604.6 L786.3,602.9 L787.9,601.5 L789.3,600.2 L790.3,599.2 L791.1,598.6 L791.7,598.1 L792.3,597.6 L793.1,597.1 L794.2,596.5 L795.7,595.7 L797.5,594.7 L799.5,593.8 L801.6,592.8 L803.5,591.9 L805.3,591.2 L806.8,590.6 L808.1,590.2 L809.4,589.8 L810.7,589.6 L812.2,589.3 L813.9,589.1 L816.0,588.9 L818.5,588.9 L821.1,588.8 L823.7,588.8 L826.1,588.8 L828.1,588.7 L829.7,588.5 L830.9,588.4 L831.9,588.2 L832.9,588.0 L833.8,587.7 L834.9,587.5 L836.1,587.2 L837.2,587.0 L838.4,586.7 L839.6,586.4 L840.9,586.2 L842.3,586.0 L844.0,585.9 L845.9,585.8 L847.9,585.8 L849.8,585.8 L851.5,585.9 L852.8,586.0 L853.7,586.1 L854.1,586.3 L854.4,586.5 L854.6,586.7 L854.9,587.0 L855.4,587.5 L856.1,588.1 L857.0,588.7 L857.9,589.4 L858.9,590.3 L859.9,591.2 L860.8,592.2 L861.7,593.3 L862.6,594.4 L863.5,595.7 L864.4,597.1 L865.3,598.6 L866.1,600.2 L866.9,602.0 L867.6,603.9 L868.3,606.0 L868.9,608.2 L869.6,610.5 L870.2,613.0 L870.8,615.5 L871.4,618.1 L871.9,620.8 L872.4,623.7 L873.0,626.9 L873.5,630.5 L874.1,634.6 L874.6,639.1 L875.2,643.9 L875.8,648.9 L876.3,653.9 L876.9,658.7 L877.4,654.8 L878.0,650.9 L878.5,646.9 L879.1,643.0 L879.6,639.3 L880.2,635.9 L880.8,632.7 L881.3,629.8 L881.9,627.0 L882.4,624.4 L883.0,622.0 L883.6,619.7 L884.2,617.6 L884.9,615.7 L885.5,613.9 L886.2,612.3 L886.9,610.9 L887.6,609.7 L888.3,608.7 L889.1,608.0 L889.9,607.4 L890.7,607.0 L891.5,606.7 L892.3,606.6 L893.1,606.6 L893.9,606.7 L894.6,607.0 L895.4,607.5 L896.2,608.1 L897.0,609.0 L897.8,610.1 L898.6,611.4 L899.4,612.9 L900.2,614.6 L901.0,616.4 L901.7,618.4 L902.4,620.5 L903.0,622.7 L903.6,625.1 L904.1,627.7 L904.6,630.4 L905.1,633.2 L905.5,636.1 L905.9,639.0 L906.2,642.1 L906.5,645.5 L906.8,649.2 L907.1,653.3 L907.4,658.0 L907.7,663.3 L908.0,668.9 L908.3,674.6 L908.6,680.4 L908.9,686.0 L909.3,680.0 L909.7,673.7 L910.0,667.5 L910.4,661.5 L910.8,655.8 L911.2,650.6 L911.6,645.9 L912.0,641.7 L912.4,637.7 L912.9,634.1 L913.3,630.8 L913.8,627.8 L914.3,625.1 L914.9,622.7 L915.4,620.7 L916.0,618.9 L916.6,617.2 L917.2,615.7 L917.8,614.3 L918.4,613.1 L918.9,612.1 L919.5,611.2 L920.1,610.4 L920.6,609.7 L921.1,609.1 L921.5,608.7 L921.9,608.3 L922.3,608.1 L922.8,608.0 L923.3,608.0 L923.9,608.1 L924.6,608.3 L925.3,608.5 L926.0,609.0 L926.7,609.5 L927.3,610.3 L927.9,611.3 L928.5,612.5 L929.0,613.8 L929.6,615.3 L930.1,616.8 L930.6,618.4 L931.1,620.0 L931.6,621.8 L932.0,623.7 L932.5,625.5 L932.9,627.4 L933.3,629.1 L933.7,630.7 L934.0,632.3 L934.3,633.9 L934.5,635.4 L934.8,636.9 L935.1,638.5" stroke="#ff0000" stroke-width="2.2"/>
</g>
<path d="M204.1,675.8V240H942V675.8" stroke="#6e6e6e" stroke-width="1.8" fill="none"/>
<path d="M203.2,674.9H942.9" stroke="#6e6e6e" stroke-width="1.8" fill="none"/>
<g fill="#f6f2ee" stroke="#2a8cf0" stroke-width="1.1" stroke-linejoin="round">
<path d="M204,240.3L208,247H206.3V254.3H201.7V247H200Z"/>
<path d="M204,674.5L200.2,666.7H201.8V660.5H206.2V666.7H207.8Z"/>
<path d="M203.7,674.8L211.5,671V672.6H218.5V677H211.5V678.6Z"/>
<path d="M942,674.9L934.3,671V672.6H927.5V677.2H934.3V678.8Z"/>
</g>
<g font-size="13.3" fill="#000">
<text transform="translate(193.2,249.2) scale(0.93,1)" text-anchor="end">40</text>
<text transform="translate(193.2,284.2) scale(0.93,1)" text-anchor="end">30</text>
<text transform="translate(193.2,320.2) scale(0.93,1)" text-anchor="end">20</text>
<text transform="translate(193.2,355.2) scale(0.93,1)" text-anchor="end">10</text>
<text transform="translate(193.2,391.2) scale(0.93,1)" text-anchor="end">0</text>
<text transform="translate(193.2,426.2) scale(0.93,1)" text-anchor="end">-10</text>
<text transform="translate(193.2,462.2) scale(0.93,1)" text-anchor="end">-20</text>
<text transform="translate(193.2,497.2) scale(0.93,1)" text-anchor="end">-30</text>
<text transform="translate(193.2,532.2) scale(0.93,1)" text-anchor="end">-40</text>
<text transform="translate(193.2,568.2) scale(0.93,1)" text-anchor="end">-50</text>
<text transform="translate(193.2,603.2) scale(0.93,1)" text-anchor="end">-60</text>
<text transform="translate(193.2,639.2) scale(0.93,1)" text-anchor="end">-70</text>
<text transform="translate(193.2,674.2) scale(0.93,1)" text-anchor="end">-80</text>
<text transform="translate(250.1,694.1) scale(0.93,1)" text-anchor="middle">-160</text>
<text transform="translate(315.1,694.1) scale(0.93,1)" text-anchor="middle">-128</text>
<text transform="translate(379.1,694.1) scale(0.93,1)" text-anchor="middle">-96</text>
<text transform="translate(443.1,694.1) scale(0.93,1)" text-anchor="middle">-64</text>
<text transform="translate(508.1,694.1) scale(0.93,1)" text-anchor="middle">-32</text>
<text transform="translate(573.0,694.1) scale(0.93,1)" text-anchor="middle">0</text>
<text transform="translate(637.0,694.1) scale(0.93,1)" text-anchor="middle">32</text>
<text transform="translate(702.0,694.1) scale(0.93,1)" text-anchor="middle">64</text>
<text transform="translate(766.0,694.1) scale(0.93,1)" text-anchor="middle">96</text>
<text transform="translate(830.0,694.1) scale(0.93,1)" text-anchor="middle">128</text>
<text transform="translate(895.0,694.1) scale(0.93,1)" text-anchor="middle">160</text>
</g>
<text x="475.6" y="229.6" font-size="16.6" textLength="123.6" lengthAdjust="spacingAndGlyphs">mom_rcs_cart_yz</text>
<text x="555.1" y="713.6" font-size="16.6" textLength="35.3" lengthAdjust="spacingAndGlyphs">theta</text>
<text transform="translate(142.3,482.8) rotate(-90)" font-size="16.6" textLength="91" lengthAdjust="spacingAndGlyphs">rcs_theta_db</text>
</g>
</svg>
</body></html>
